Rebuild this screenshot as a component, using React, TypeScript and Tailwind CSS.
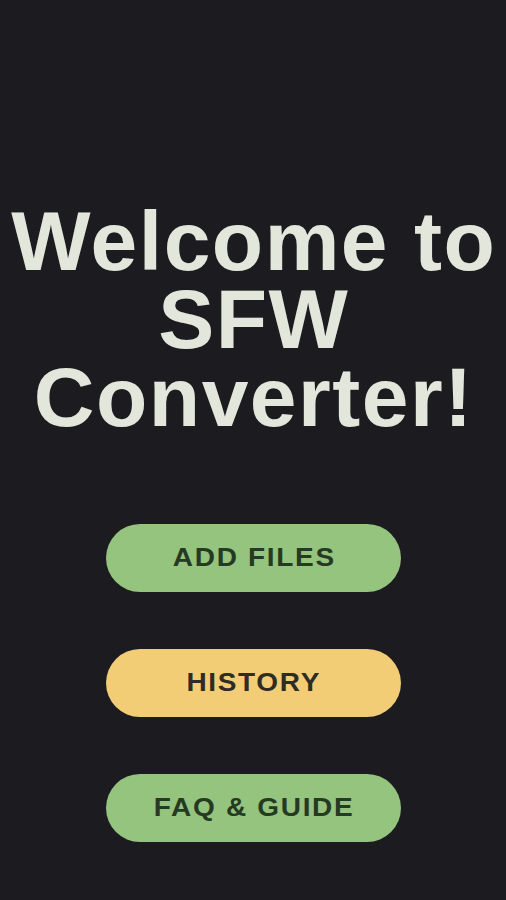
import React from 'react';

interface MenuButtonProps {
  label: string;
  tone: 'green' | 'yellow';
}

function MenuButton({ label, tone }: MenuButtonProps) {
  const toneClasses = {
    green: 'bg-[#94c47d] text-[#263a23]',
    yellow: 'bg-[#f3cd75] text-[#2e2c25]',
  };

  return (
    <button
      className={`flex h-[68px] w-[295px] items-center justify-center rounded-full text-[25px] font-bold uppercase ${toneClasses[tone]}`}
      style={{ fontFamily: "'Liberation Sans', Arial, sans-serif" }}
    >
      {/* glyphs in the shot are a touch wider than Arial */}
      <span className="inline-block scale-x-[1.12] pl-[0.06em] tracking-[0.06em]">{label}</span>
    </button>
  );
}

export default function App() {
  return (
    <div className="flex min-h-[900px] w-full flex-col items-center bg-[#1c1b1f] pt-[202px]">
      <h1
        className="pl-[1.5px] text-center text-[84px] font-bold leading-[78px] tracking-[1.5px] text-[#e2e6db]"
        style={{ fontFamily: "'Liberation Sans', Arial, sans-serif" }}
      >
        Welcome to
        <br />
        SFW
        <br />
        Converter!
      </h1>

      <div className="mt-[88px] flex flex-col items-center gap-[57px]">
        <MenuButton label="Add Files" tone="green" />
        <MenuButton label="History" tone="yellow" />
        <MenuButton label="FAQ & Guide" tone="green" />
      </div>
    </div>
  );
}
